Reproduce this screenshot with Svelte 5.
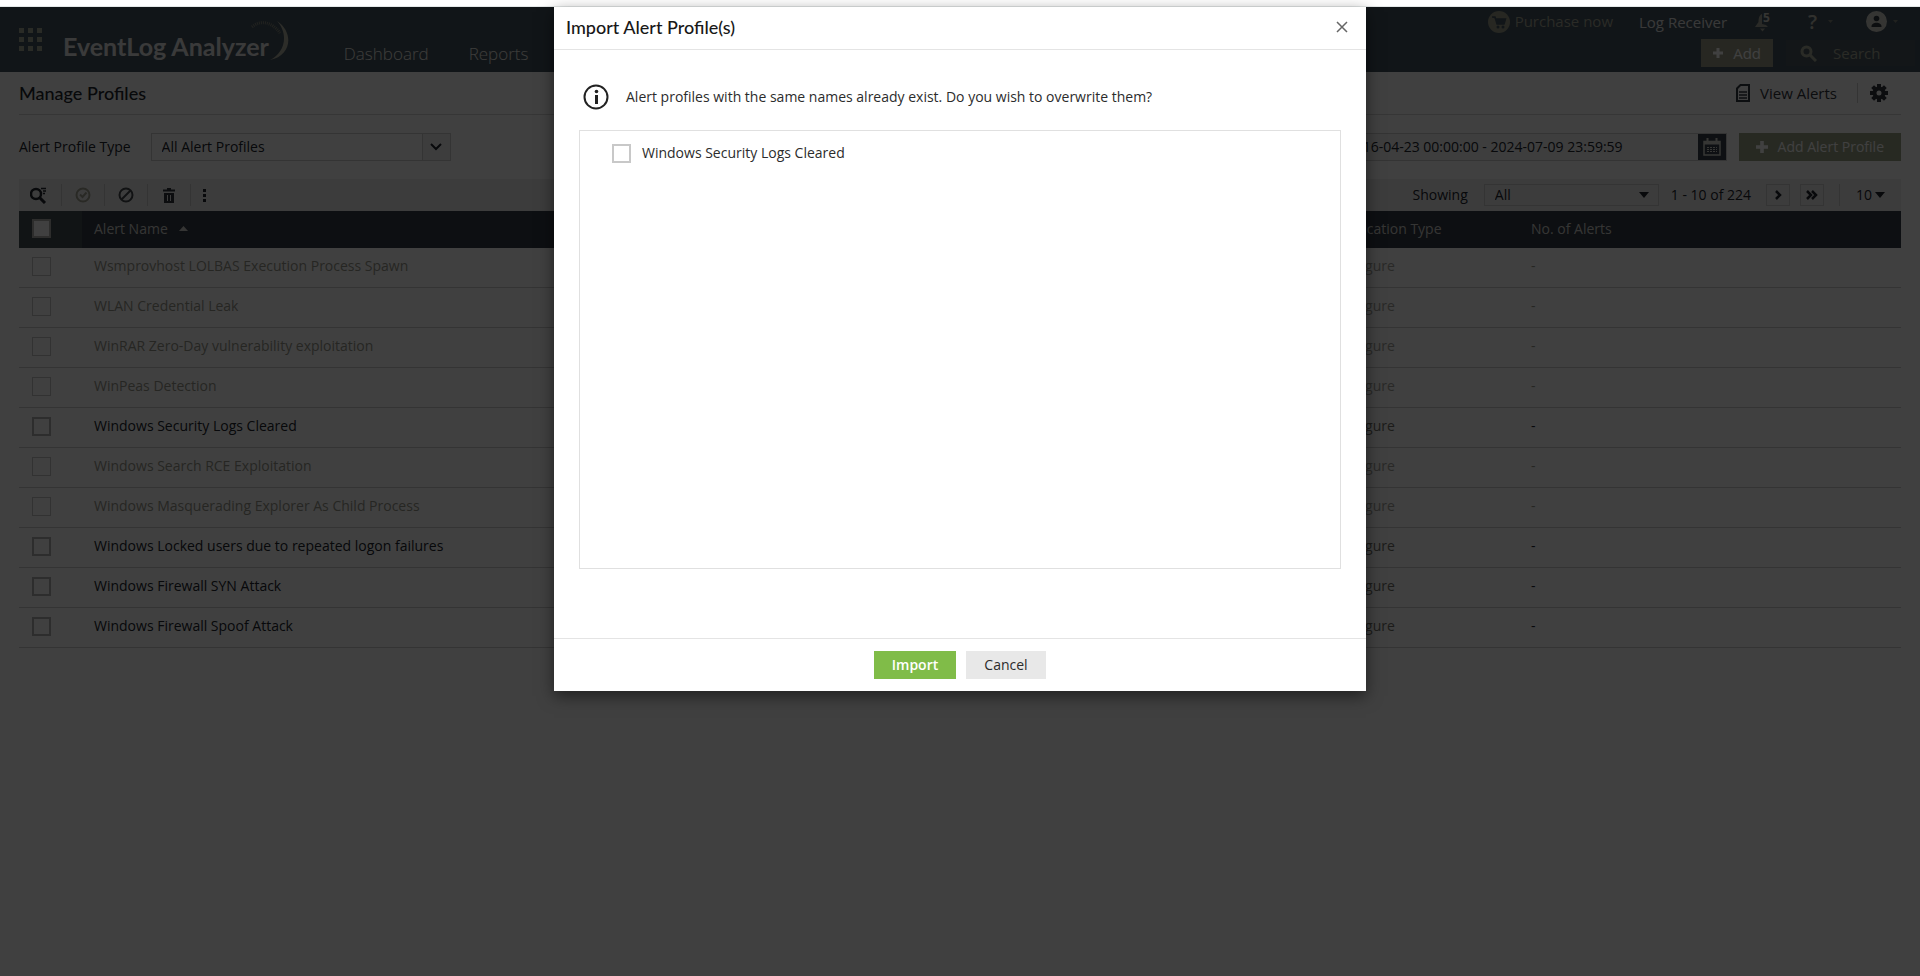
<script lang="ts">
  type Profile = { name: string; enabled: boolean };

  const navItems = ["Dashboard", "Reports"];

  const profiles: Profile[] = [
    { name: "Wsmprovhost LOLBAS Execution Process Spawn", enabled: false },
    { name: "WLAN Credential Leak", enabled: false },
    { name: "WinRAR Zero-Day vulnerability exploitation", enabled: false },
    { name: "WinPeas Detection", enabled: false },
    { name: "Windows Security Logs Cleared", enabled: true },
    { name: "Windows Search RCE Exploitation", enabled: false },
    { name: "Windows Masquerading Explorer As Child Process", enabled: false },
    { name: "Windows Locked users due to repeated logon failures", enabled: true },
    { name: "Windows Firewall SYN Attack", enabled: true },
    { name: "Windows Firewall Spoof Attack", enabled: true },
  ];

  const duplicates = ["Windows Security Logs Cleared"];

  let range = $state("2016-04-23 00:00:00 - 2024-07-09 23:59:59");
  let open = $state(true);
</script>

<div class="app">
  <header class="topbar">
    <button class="apps" aria-label="Applications">
      <svg width="23" height="24" viewBox="0 0 23 24" fill="#a8aa98">
        {#each [0, 9, 18] as y}
          {#each [0, 9, 18] as x}
            <rect {x} {y} width="5" height="5" />
          {/each}
        {/each}
      </svg>
    </button>
    <div class="logo">
      <span>EventLog Analyzer</span>
      <svg class="swoosh" width="44" height="50" viewBox="0 0 44 50">
        <path d="M5 9 C13 2 24 3 33 15" fill="none" stroke="#85877c" stroke-width="3" stroke-dasharray="1 1" />
        <path d="M30 3 C47 14 45 38 23 42 C38 35 42 16 30 3Z" fill="#b4b4a4" />
      </svg>
    </div>
    <nav>
      {#each navItems as item}
        <a href="#{item.toLowerCase()}">{item}</a>
      {/each}
    </nav>
    <div class="account">
      <div class="links">
        <a class="buy" href="#purchase">
          <svg width="22" height="22" viewBox="0 0 22 22">
            <circle cx="11" cy="11" r="11" fill="#9a9c88" />
            <path d="M4 6h3l2 7h7l1.500-5H8" fill="#445460" stroke="#445460" stroke-width="1.500" />
            <circle cx="10" cy="16" r="1.500" fill="#445460" />
            <circle cx="15" cy="16" r="1.500" fill="#445460" />
          </svg>
          Purchase now
        </a>
        <a class="receiver" href="#receiver">Log Receiver</a>
        <button class="bell" aria-label="Notifications">
          <svg width="15" height="20" viewBox="0 0 15 20" fill="#a8a89c">
            <path d="M7 2 C4 3 3.500 7 3.500 10 L0 15 H13 L11 13 L7 12Z" />
            <path d="M5 16.500h5l-2.500 3Z" />
          </svg>
          <b>5</b>
        </button>
        <button class="help" aria-label="Help">
          <span>?</span>
          <svg width="5" height="3" viewBox="0 0 5 3" fill="#85877c"><path d="M0 0h5L2.500 3Z" /></svg>
        </button>
        <button class="user" aria-label="Account">
          <svg width="21" height="21" viewBox="0 0 21 21">
            <circle cx="10.500" cy="10.500" r="10.500" fill="#d4d4cc" />
            <circle cx="10.500" cy="7.500" r="2.800" fill="#303840" />
            <path d="M5.500 15.500c0-5 10-5 10 0v.500h-10Z" fill="#303840" />
          </svg>
          <svg width="5" height="3" viewBox="0 0 5 3" fill="#85877c"><path d="M0 0h5L2.500 3Z" /></svg>
        </button>
      </div>
      <div class="actions">
        <button class="add">
          <svg width="10" height="10" viewBox="0 0 10 10" fill="#fff"><path d="M3.500 0h3v3.500H10v3H6.500V10h-3V6.500H0v-3h3.500Z" /></svg>
          Add
        </button>
        <label class="search">
          <svg width="17" height="17" viewBox="0 0 17 17" fill="none" stroke="#a8aa98">
            <circle cx="6.500" cy="6.500" r="4.500" stroke-width="3" />
            <path d="M10 10l6 6" stroke-width="3" />
          </svg>
          <input type="text" placeholder="Search" aria-label="Search" />
        </label>
      </div>
    </div>
  </header>

  <main>
    <div class="title-row">
      <h1>Manage Profiles</h1>
      <a class="view" href="#alerts">
        <svg width="14" height="18" viewBox="0 0 14 18" fill="none" stroke="#303840">
          <path d="M4.500 1H13v16H1V4.500Z" stroke-width="2" />
          <path d="M3 8h8M3 11h8M3 14h8" stroke-width="1.500" />
        </svg>
        View Alerts
      </a>
      <button class="gear" aria-label="Settings">
        <svg width="18" height="18" viewBox="0 0 18 18">
          <circle cx="9" cy="9" r="4.500" fill="none" stroke="#30343c" stroke-width="4" />
          <g fill="#30343c">
            {#each [0, 45, 90, 135, 180, 225, 270, 315] as a}
              <rect x="7" y="0" width="4" height="4" transform="rotate({a} 9 9)" />
            {/each}
          </g>
        </svg>
      </button>
    </div>

    <div class="filters">
      <label for="profile-type">Alert Profile Type</label>
      <div class="select type">
        <select id="profile-type"><option>All Alert Profiles</option></select>
        <span class="arrow">
          <svg width="12" height="8" viewBox="0 0 12 8" fill="none" stroke="#20242c" stroke-width="2"><path d="M1 1l5 5 5-5" /></svg>
        </span>
      </div>
      <div class="range">
        <input type="text" bind:value={range} aria-label="Date range" />
        <button aria-label="Open calendar">
          <svg width="18" height="18" viewBox="0 0 18 18" fill="none" stroke="#d8d8d0">
            <path d="M1 3.500h16v13.500H1Z" stroke-width="1.500" />
            <path d="M1 5h16" stroke-width="3" />
            <path d="M4.500 0v4M13.500 0v4" stroke-width="2" />
            <path d="M4 9.500h10M4 11.500h10M4 13.500h10" stroke-dasharray="2 1" />
          </svg>
        </button>
      </div>
      <button class="add-profile">
        <svg width="12" height="12" viewBox="0 0 10 10" fill="#fff"><path d="M3.500 0h3v3.500H10v3H6.500V10h-3V6.500H0v-3h3.500Z" /></svg>
        Add Alert Profile
      </button>
    </div>

    <div class="toolbar">
      <button aria-label="Search profiles">
        <svg width="20" height="17" viewBox="0 0 20 17" fill="none" stroke="#20242c">
          <circle cx="6" cy="7" r="5" stroke-width="2.500" />
          <path d="M9 10l6 6" stroke-width="3" />
          <path d="M11 1.500h5M13 4h3M13 6.500h2" stroke-width="1.500" />
        </svg>
      </button>
      <button aria-label="Enable">
        <svg width="16" height="16" viewBox="0 0 16 16" fill="none" stroke="#a4a494" stroke-width="2">
          <circle cx="8" cy="8" r="6.500" /><path d="M5 7.500l2.500 2.500L11.500 5.500" />
        </svg>
      </button>
      <button aria-label="Disable">
        <svg width="16" height="16" viewBox="0 0 16 16" fill="none" stroke="#44484c" stroke-width="2">
          <circle cx="8" cy="8" r="6.500" /><path d="M3.500 12.500l9-9" />
        </svg>
      </button>
      <button aria-label="Delete">
        <svg width="12" height="15" viewBox="0 0 12 15" fill="#30343c">
          <path d="M4 0h4v1.500h4v2H0v-2h4ZM1 5h10v10H1Z" />
          <path d="M4.500 7v6M7.500 7v6" stroke="#eee" />
        </svg>
      </button>
      <button class="more" aria-label="More">
        <svg width="3" height="13" viewBox="0 0 3 13" fill="#20242c">
          <rect width="3" height="3" /><rect y="5" width="3" height="3" /><rect y="10" width="3" height="3" />
        </svg>
      </button>

      <div class="pager">
        <label for="showing">Showing</label>
        <div class="select showing">
          <select id="showing"><option>All</option></select>
          <svg width="10" height="6" viewBox="0 0 10 6" fill="#20242c"><path d="M0 0h10L5 6Z" /></svg>
        </div>
        <span class="count">1 - 10 of 224</span>
        <button aria-label="Next page">
          <svg width="8" height="10" viewBox="0 0 8 10" fill="none" stroke="#20242c" stroke-width="2.500"><path d="M2 1l4 4-4 4" /></svg>
        </button>
        <button aria-label="Last page">
          <svg width="12" height="10" viewBox="0 0 12 10" fill="none" stroke="#20242c" stroke-width="2.500"><path d="M1 1l4 4-4 4M6 1l4 4-4 4" /></svg>
        </button>
        <button class="size">
          10
          <svg width="10" height="6" viewBox="0 0 10 6" fill="#20242c"><path d="M0 0h10L5 6Z" /></svg>
        </button>
      </div>
    </div>

    <table>
      <thead>
        <tr>
          <th class="check"><input type="checkbox" aria-label="Select all" /></th>
          <th class="name">
            Alert Name
            <svg width="9" height="5" viewBox="0 0 9 5" fill="#d4d4d0"><path d="M0 5h9L4.500 0Z" /></svg>
          </th>
          <th class="notify">Notification Type</th>
          <th class="alerts">No. of Alerts</th>
        </tr>
      </thead>
      <tbody>
        {#each profiles as p (p.name)}
          <tr class:off={!p.enabled}>
            <td class="check"><input type="checkbox" aria-label={p.name} /></td>
            <td>{p.name}</td>
            <td class="config">Configure</td>
            <td>-</td>
          </tr>
        {/each}
      </tbody>
    </table>
  </main>

  {#if open}
    <div class="overlay">
      <div class="modal" role="dialog" aria-modal="true" aria-labelledby="modal-title">
        <div class="modal-head">
          <h2 id="modal-title">Import Alert Profile(s)</h2>
          <button aria-label="Close" onclick={() => (open = false)}>
            <svg width="12" height="12" viewBox="0 0 12 12" fill="none" stroke="#666" stroke-width="1.500"><path d="M1 1l10 10M11 1L1 11" /></svg>
          </button>
        </div>
        <div class="modal-body">
          <p>
            <svg width="26" height="26" viewBox="0 0 26 26">
              <circle cx="13" cy="13" r="11.500" fill="none" stroke="#222" stroke-width="2" />
              <rect x="12" y="11" width="3" height="9" fill="#222" />
              <circle cx="13.500" cy="7.500" r="1.800" fill="#222" />
            </svg>
            Alert profiles with the same names already exist. Do you wish to overwrite them?
          </p>
          <div class="list">
            {#each duplicates as name}
              <label><input type="checkbox" />{name}</label>
            {/each}
          </div>
        </div>
        <div class="modal-foot">
          <button class="import">Import</button>
          <button class="cancel" onclick={() => (open = false)}>Cancel</button>
        </div>
      </div>
    </div>
  {/if}
</div>

<style>
  :global(body) {
    background: #fff;
  }
  .app {
    position: relative;
    box-sizing: border-box;
    min-height: 100vh;
    padding-top: 7px;
    font-family: "Open Sans", "Noto Sans", sans-serif;
    font-size: 14px;
    line-height: 20px;
    color: #20242c;
  }
  .app :global(*) {
    box-sizing: border-box;
  }
  button,
  input,
  select {
    font: inherit;
    color: inherit;
  }
  button {
    display: flex;
    align-items: center;
    padding: 0;
    border: 0;
    background: none;
  }
  a {
    color: inherit;
    text-decoration: none;
  }
  svg {
    flex: none;
  }
  select {
    width: 100%;
    height: 100%;
    border: 0;
    background: none;
    appearance: none;
  }
  input[type="checkbox"] {
    display: block;
    width: 19px;
    height: 19px;
    margin: 0;
    border: 2px solid #c8c8c8;
    background: #fff;
    appearance: none;
  }

  .topbar {
    display: flex;
    height: 65px;
    padding-left: 19px;
    background: #445460;
  }
  .apps {
    align-self: flex-start;
    margin-top: 21px;
  }
  .logo {
    position: relative;
    margin: 24px 0 0 21px;
    font: 700 25px/30px Lato, sans-serif;
    color: #e8e8e8;
  }
  .swoosh {
    position: absolute;
    top: -13px;
    right: -22px;
  }
  nav {
    display: flex;
    gap: 40px;
    margin: 36px 0 0 75px;
    font-size: 17px;
    font-weight: 300;
    line-height: 22px;
    color: #f0f0e8;
  }
  .account {
    display: flex;
    flex-direction: column;
    align-items: flex-end;
    margin-left: auto;
    font-size: 15px;
  }
  .links,
  .actions {
    display: flex;
    align-items: center;
  }
  .links {
    height: 29px;
    margin-right: 22px;
  }
  .buy {
    display: flex;
    gap: 5px;
    margin-right: 26px;
    color: #a8aa98;
  }
  .receiver {
    margin-right: 28px;
    color: #e4e4e4;
  }
  .bell {
    margin-right: 38px;
    color: #d4d4cc;
  }
  .bell b {
    align-self: flex-start;
    margin-left: -7px;
    font-size: 12px;
    line-height: 12px;
  }
  .help {
    gap: 11px;
    margin-right: 33px;
    font-size: 20px;
    font-weight: 600;
    color: #c4c4b8;
  }
  .user {
    gap: 6px;
  }
  .actions {
    gap: 13px;
    margin: 3px 5px 0 0;
  }
  .add {
    gap: 10px;
    height: 28px;
    padding: 0 12px;
    background: #9a9c88;
    color: #fff;
  }
  .search {
    display: flex;
    align-items: center;
    gap: 16px;
    width: 129px;
    height: 26px;
    padding-left: 14px;
    background: #4c5a62;
  }
  .search input {
    width: 70px;
    padding: 0;
    border: 0;
    background: none;
  }
  .search input::placeholder {
    color: #a8aa98;
  }

  main {
    padding: 0 19px;
  }
  .title-row {
    display: flex;
    align-items: center;
    height: 43px;
    border-bottom: 1px solid #d8d8d8;
  }
  h1,
  h2 {
    margin: 0;
    font: 500 18px/24px Lato, sans-serif;
  }
  .view {
    display: flex;
    align-items: center;
    gap: 10px;
    margin-left: auto;
    padding-right: 20px;
    border-right: 1px solid #d0d0d0;
    font-size: 15px;
    color: #30343c;
  }
  .gear {
    margin: 0 13px 0 12px;
  }
  .filters {
    display: flex;
    align-items: center;
    height: 64px;
  }
  .select {
    position: relative;
    display: flex;
    align-items: center;
    border: 1px solid #d0d0d0;
  }
  .type {
    width: 300px;
    height: 28px;
    margin-left: 20px;
  }
  .type select {
    padding-left: 10px;
  }
  .arrow {
    display: flex;
    flex: 0 0 28px;
    align-items: center;
    justify-content: center;
    height: 26px;
    border-left: 1px solid #d0d0d0;
    background: #f4f4f4;
  }
  .range {
    display: flex;
    width: 400px;
    height: 28px;
    margin-left: auto;
    border: 1px solid #d0d0d0;
    background: #f6f6f6;
  }
  .range input {
    flex: 1;
    min-width: 0;
    padding: 0 75px 0 0;
    border: 0;
    background: none;
    text-align: right;
  }
  .range button {
    justify-content: center;
    width: 28px;
    background: #38424c;
  }
  .add-profile {
    gap: 10px;
    height: 28px;
    margin-left: 12px;
    padding: 0 17px;
    background: #9ca488;
    color: #fff;
  }
  .toolbar {
    display: flex;
    align-items: center;
    height: 32px;
    background: #f0f0f0;
  }
  .toolbar > button {
    justify-content: center;
    width: 43px;
    height: 22px;
    border-right: 1px solid #d0d0d0;
  }
  .toolbar > .more {
    width: 27px;
    border: 0;
  }
  .pager {
    display: flex;
    align-items: center;
    margin-left: auto;
  }
  .showing {
    width: 175px;
    height: 22px;
    margin: 0 12px 0 16px;
    padding-right: 9px;
  }
  .showing select {
    padding-left: 10px;
  }
  .count {
    margin-right: 15px;
  }
  .pager button {
    justify-content: center;
    width: 24px;
    height: 22px;
    margin-right: 10px;
    border: 1px solid #d0d0d0;
  }
  .pager .size {
    gap: 3px;
    width: 62px;
    margin: 0 0 0 5px;
    border-width: 0 0 0 1px;
  }

  table {
    width: 100%;
    table-layout: fixed;
    border-spacing: 0;
  }
  th,
  td {
    padding: 0 0 3px 12px;
    font-weight: 400;
    text-align: left;
  }
  th {
    height: 37px;
    padding-bottom: 2px;
    background: #363c48;
    color: #d4d4d0;
  }
  th.check {
    width: 63px;
    background: #465054;
  }
  .check {
    padding-left: 13px;
  }
  th.check input {
    border-color: #b4b4b0;
  }
  .name svg {
    margin: 0 0 3px 8px;
  }
  .notify {
    width: 200px;
  }
  .alerts {
    width: 382px;
  }
  td {
    height: 40px;
    border-bottom: 1px solid #d0d0d0;
  }
  .off {
    color: #98988c;
  }
  .off input {
    border-width: 1px;
  }
  .config {
    color: #707068;
  }
  .off .config {
    color: #a4a49c;
  }
  tbody tr:not(.off) input {
    border-color: #b4b4b4;
  }

  .overlay {
    position: absolute;
    inset: 6px 0 0;
    display: flex;
    align-items: flex-start;
    justify-content: center;
    border-top: 1px solid #e4e8e8;
    background: rgba(0, 0, 0, 0.75);
    background-clip: padding-box;
  }
  .modal {
    width: 812px;
    max-width: 100%;
    background: #fff;
    box-shadow: 0 5px 15px rgba(0, 0, 0, 0.5);
    color: #2c2c2c;
  }
  .modal-head {
    display: flex;
    align-items: center;
    justify-content: space-between;
    height: 43px;
    padding: 0 18px 3px 12px;
    border-bottom: 1px solid #e4e4e4;
    color: #181818;
  }
  .modal-body {
    padding: 34px 25px 69px;
  }
  p {
    display: flex;
    align-items: center;
    gap: 17px;
    margin: 0 0 20px 4px;
  }
  .list {
    height: 439px;
    padding: 12px 32px;
    border: 1px solid #e0e0e0;
  }
  .list label {
    display: flex;
    align-items: center;
    gap: 11px;
  }
  .modal-foot {
    display: flex;
    justify-content: center;
    gap: 10px;
    padding: 12px;
    border-top: 1px solid #e4e4e4;
  }
  .modal-foot button {
    justify-content: center;
    width: 80px;
    height: 28px;
  }
  .modal-foot .import {
    width: 82px;
    background: #80bc48;
    font-weight: 600;
    color: #fff;
  }
  .cancel {
    background: #e8e8e8;
  }
</style>
